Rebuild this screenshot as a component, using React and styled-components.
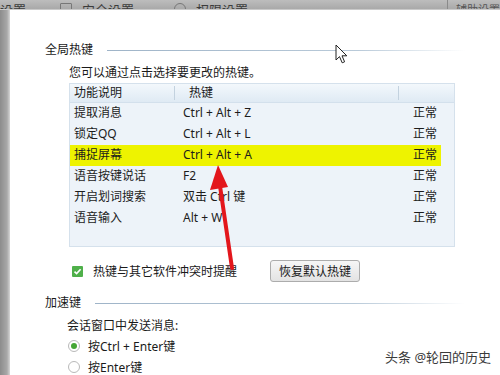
import React from 'react';
import styled, { createGlobalStyle } from 'styled-components';

const GlobalStyle = createGlobalStyle`
    html, body {
        margin: 0;
        padding: 0;
        background: #fff;
    }
    body {
        font-family: "Noto Sans", "Noto Sans CJK SC", sans-serif;
        font-size: 12px;
        color: #222;
    }
`;

const Window = styled.div`
    position: relative;
    width: 500px;
    height: 375px;
    overflow: hidden;
    display: flex;
    flex-direction: column;
`;

const TabBar = styled.div`
    height: 9px;
    flex: none;
    display: flex;
    align-items: flex-end;
    overflow: hidden;
    background: linear-gradient(#bdbdbd, #a9a9a9);
    border-bottom: 1px solid #c9c9c9;
`;

const Tab = styled.div`
    display: flex;
    align-items: center;
    gap: 10px;
    height: 18px;
    margin-bottom: -9px;
    padding-left: ${p => p.$indent}px;
    color: #3c3c3c;
    font-size: 13px;
    white-space: nowrap;
`;

const TabIcon = styled.span`
    width: 12px;
    height: 12px;
    border: 1px solid #777;
    border-radius: ${p => (p.$round ? '6px 6px 2px 2px' : '1px')};
    box-sizing: border-box;
`;

const TabDivider = styled.div`
    margin-left: auto;
    width: 1px;
    height: 9px;
    background: #8a8a8a;
`;

const SideTab = styled(Tab)`
    padding-left: 8px;
    font-size: 11px;
    color: #555;
`;

const Body = styled.div`
    flex: 1;
    display: flex;
    min-height: 0;
`;

const LeftStrip = styled.div`
    width: 10px;
    flex: none;
    background: linear-gradient(90deg, #8c8c8c, #a8a8a8 70%, #d6d6d6);
`;

const Content = styled.div`
    flex: 1;
    padding: 32px 35px 0 35px;
    background: #fff;
`;

const SectionHead = styled.div`
    display: flex;
    align-items: center;
    gap: 14px;
    height: 16px;
    margin-top: ${p => p.$top || 0}px;
    line-height: 16px;
    color: #1a1a1a;
`;

const SectionLine = styled.div`
    flex: 1;
    height: 1px;
    background: linear-gradient(90deg, #9fb4c8, #b9cad9 70%, rgba(255, 255, 255, 0));
`;

const Note = styled.div`
    margin: ${p => p.$top}px 0 0 ${p => p.$left}px;
    line-height: 16px;
    color: #1a1a1a;
`;

const Table = styled.div`
    margin: 2px 0 0 24px;
    width: 386px;
    height: 164px;
    box-sizing: border-box;
    border: 1px solid #d5e1ec;
    background: #edf3f9;
    display: flex;
    flex-direction: column;
`;

const cols = '105px 224px 1fr';

const HeadRow = styled.div`
    display: grid;
    grid-template-columns: ${cols};
    height: 18px;
    line-height: 18px;
    background: linear-gradient(#f3f8fc, #dfeaf4);
    border-bottom: 1px solid #d3e0ec;
    color: #1a1a1a;
`;

const HeadCell = styled.div`
    padding-left: ${p => p.$pad}px;
    border-right: ${p => (p.$sep ? '1px solid #c3d2df' : 'none')};
    margin: 2px 0;
    line-height: 14px;
`;

const Row = styled.div`
    display: grid;
    grid-template-columns: ${cols};
    width: calc(100% - 13px);
    height: 21px;
    line-height: 19px;
    background: ${p => (p.$active ? '#eef300' : 'transparent')};
    color: #1c1c1c;
`;

const Cell = styled.div`
    padding-left: ${p => p.$pad}px;
    white-space: nowrap;
`;

const OptionRow = styled.div`
    display: flex;
    align-items: center;
    height: 22px;
    margin: 13px 0 0 27px;
`;

const CheckLabel = styled.label`
    display: flex;
    align-items: center;
    gap: 10px;
    width: 198px;
    color: #1a1a1a;
`;

const CheckBox = styled.span`
    width: 11px;
    height: 11px;
    border-radius: 1px;
    background: #4fb04a;
    display: flex;
    align-items: center;
    justify-content: center;
`;

const Button = styled.button`
    width: 90px;
    height: 22px;
    padding: 0;
    border: 1px solid #acacac;
    border-radius: 3px;
    background: linear-gradient(#f6f6f6, #e3e3e3);
    font-family: inherit;
    font-size: 12px;
    color: #1a1a1a;
`;

const Radio = styled.label`
    display: flex;
    align-items: center;
    gap: 8px;
    height: 20px;
    margin: ${p => p.$top}px 0 0 23px;
    color: #1a1a1a;
`;

const RadioDot = styled.span`
    width: 12px;
    height: 12px;
    box-sizing: border-box;
    border-radius: 50%;
    border: 1px solid #b9b9b9;
    background: #fff;
    display: flex;
    align-items: center;
    justify-content: center;
    &::after {
        content: '';
        width: 6px;
        height: 6px;
        border-radius: 50%;
        background: ${p => (p.$on ? '#45a635' : 'transparent')};
    }
`;

const Watermark = styled.div`
    position: absolute;
    left: 385px;
    top: 348px;
    font-size: 13px;
    line-height: 18px;
    color: #3b3b3b;
    white-space: nowrap;
`;

const Overlay = styled.svg`
    position: absolute;
    left: ${p => p.$x}px;
    top: ${p => p.$y}px;
    pointer-events: none;
`;

const hotkeys = [
    { name: '提取消息', key: 'Ctrl + Alt + Z' },
    { name: '锁定QQ', key: 'Ctrl + Alt + L' },
    { name: '捕捉屏幕', key: 'Ctrl + Alt + A', active: true },
    { name: '语音按键说话', key: 'F2' },
    { name: '开启划词搜索', key: '双击 Ctrl 键' },
    { name: '语音输入', key: 'Alt + W' },
];

const App = () => {
    return (
        <Window>
            <GlobalStyle />
            <TabBar>
                <Tab $indent={0}>设置</Tab>
                <Tab $indent={34}><TabIcon />安全设置</Tab>
                <Tab $indent={40}><TabIcon $round />权限设置</Tab>
                <TabDivider />
                <SideTab>辅助设置</SideTab>
            </TabBar>
            <Body>
                <LeftStrip />
                <Content>
                    <SectionHead>
                        全局热键
                        <SectionLine />
                    </SectionHead>
                    <Note $top={7} $left={24}>您可以通过点击选择要更改的热键。</Note>
                    <Table>
                        <HeadRow>
                            <HeadCell $pad={4} $sep>功能说明</HeadCell>
                            <HeadCell $pad={14} $sep>热键</HeadCell>
                            <HeadCell $pad={0} />
                        </HeadRow>
                        {hotkeys.map(h => (
                            <Row key={h.name} $active={h.active}>
                                <Cell $pad={4}>{h.name}</Cell>
                                <Cell $pad={8}>{h.key}</Cell>
                                <Cell $pad={14}>正常</Cell>
                            </Row>
                        ))}
                    </Table>
                    <OptionRow>
                        <CheckLabel>
                            <CheckBox>
                                <svg width="9" height="9" viewBox="0 0 9 9">
                                    <path d="M1.5 4.6 L3.6 6.6 L7.6 2.2" fill="none" stroke="#fff" strokeWidth="1.6" />
                                </svg>
                            </CheckBox>
                            热键与其它软件冲突时提醒
                        </CheckLabel>
                        <Button>恢复默认热键</Button>
                    </OptionRow>
                    <SectionHead $top={13}>
                        加速键
                        <SectionLine />
                    </SectionHead>
                    <Note $top={7} $left={22}>会话窗口中发送消息:</Note>
                    <Radio $top={2}><RadioDot $on />按Ctrl + Enter键</Radio>
                    <Radio $top={1}><RadioDot />按Enter键</Radio>
                </Content>
            </Body>
            <Overlay $x={335} $y={44} width="14" height="21" viewBox="0 0 14 21">
                <path d="M1 1 L1 16 L4.5 12.6 L7.2 18.8 L9.6 17.8 L7 11.8 L11.8 11.8 Z" fill="#fff" stroke="#222" strokeWidth="1" strokeLinejoin="round" />
            </Overlay>
            <Overlay $x={204} $y={160} width="40" height="110" viewBox="0 0 40 110">
                <path d="M28 108 L16 26" stroke="#e3161c" strokeWidth="4" strokeLinecap="round" />
                <path d="M14 5 L6 30 L24 27 Z" fill="#e3161c" />
            </Overlay>
            <Watermark>头条 @轮回的历史</Watermark>
        </Window>
    );
};

export default App;
